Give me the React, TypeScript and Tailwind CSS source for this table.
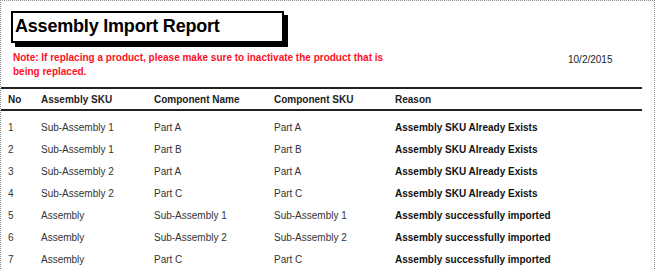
const rows = [
  { no: 1, sku: "Sub-Assembly 1", name: "Part A", comp: "Part A", reason: "Assembly SKU Already Exists" },
  { no: 2, sku: "Sub-Assembly 1", name: "Part B", comp: "Part B", reason: "Assembly SKU Already Exists" },
  { no: 3, sku: "Sub-Assembly 2", name: "Part A", comp: "Part A", reason: "Assembly SKU Already Exists" },
  { no: 4, sku: "Sub-Assembly 2", name: "Part C", comp: "Part C", reason: "Assembly SKU Already Exists" },
  { no: 5, sku: "Assembly", name: "Sub-Assembly 1", comp: "Sub-Assembly 1", reason: "Assembly successfully imported" },
  { no: 6, sku: "Assembly", name: "Sub-Assembly 2", comp: "Sub-Assembly 2", reason: "Assembly successfully imported" },
  { no: 7, sku: "Assembly", name: "Part C", comp: "Part C", reason: "Assembly successfully imported" },
];

const cols = "grid grid-cols-[33px_113px_120px_121px_1fr] pl-[7px]";

export default function App() {
  return (
    <div className="w-[655px] h-[269px] overflow-hidden bg-white border-l border-t border-r border-dotted border-[#8a8a8a] font-['Liberation_Sans',Arial,sans-serif] text-[#111]">
      <div className="pl-[10px] pt-[10px]">
        <div className="w-[273px] h-[32px] border-2 border-black shadow-[4px_4px_0_0_#000] pl-[2px] pt-[3px]">
          <h1 className="text-[18px] font-bold leading-[20px] tracking-[-0.2px] text-black">Assembly Import Report</h1>
        </div>
      </div>

      <div className="flex items-start mt-[8px]">
        <p className="pl-[12px] w-[560px] text-[10px] font-bold leading-[14px] text-[#ff0f1f]">
          Note: If replacing a product, please make sure to inactivate the product that is
          <br />
          being replaced.
        </p>
        <span className="mt-[2px] pl-[7px] text-[10px] leading-[14px] text-[#222]">10/2/2015</span>
      </div>

      <div className="w-[641px] mt-[8px] border-t-2 border-[#222]">
        <div className={`${cols} h-[22px] items-center text-[10px] font-bold text-[#222] border-b-2 border-[#222]`}>
          <span>No</span>
          <span>Assembly SKU</span>
          <span>Component Name</span>
          <span>Component SKU</span>
          <span>Reason</span>
        </div>
        <div className="pt-[5px]">
          {rows.map((r) => (
            <div key={r.no} className={`${cols} h-[22px] items-center text-[10px] text-[#333]`}>
              <span>{r.no}</span>
              <span>{r.sku}</span>
              <span>{r.name}</span>
              <span>{r.comp}</span>
              <span className="font-bold text-[#111]">{r.reason}</span>
            </div>
          ))}
        </div>
      </div>
    </div>
  );
}
